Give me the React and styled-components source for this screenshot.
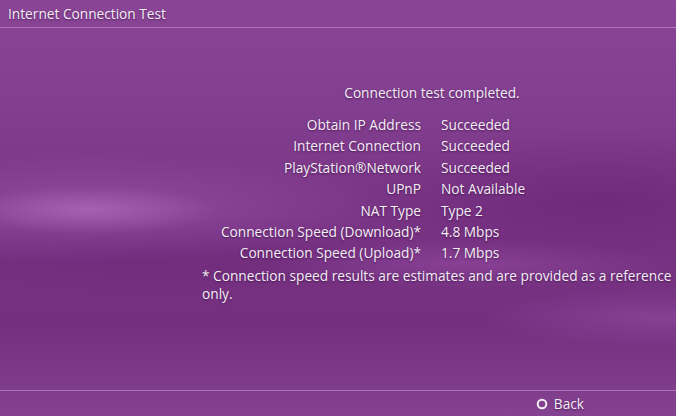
import styled, { createGlobalStyle } from "styled-components";

const GlobalStyle = createGlobalStyle`
  html, body {
    margin: 0;
    padding: 0;
    background: #7a3585;
  }
  * {
    box-sizing: border-box;
  }
`;

const Screen = styled.div`
  width: 676px;
  height: 416px;
  display: flex;
  flex-direction: column;
  overflow: hidden;
  font-family: "Open Sans", "Noto Sans", "Liberation Sans", sans-serif;
  font-size: 13.7px;
  color: #f4eef5;
  text-shadow: 0 1px 2px rgba(40, 0, 50, 0.55);
  background:
    radial-gradient(ellipse 130px 24px at 90px 210px, rgba(185, 115, 195, 0.55), rgba(185, 115, 195, 0) 100%),
    radial-gradient(ellipse 300px 55px at 90px 208px, rgba(165, 95, 180, 0.5), rgba(165, 95, 180, 0) 100%),
    radial-gradient(ellipse 200px 24px at 470px 264px, rgba(160, 85, 175, 0.4), rgba(160, 85, 175, 0) 100%),
    radial-gradient(ellipse 180px 30px at 660px 318px, rgba(160, 90, 175, 0.4), rgba(160, 90, 175, 0) 100%),
    radial-gradient(ellipse 260px 70px at 600px 200px, rgba(95, 25, 105, 0.4), rgba(95, 25, 105, 0) 100%),
    radial-gradient(ellipse 280px 45px at 150px 255px, rgba(100, 30, 110, 0.35), rgba(100, 30, 110, 0) 100%),
    linear-gradient(180deg, #8a4596 0%, #823e8f 25%, #7a3586 50%, #74307f 78%, #844291 100%);
`;

const TitleBar = styled.header`
  height: 28px;
  display: flex;
  align-items: center;
  padding-left: 8px;
  border-bottom: 1px solid rgba(210, 160, 215, 0.55);
`;

const Body = styled.main`
  flex: 1;
  display: flex;
  flex-direction: column;
  padding: 55px 0 0 202px;
`;

const Heading = styled.div`
  width: 460px;
  text-align: center;
  margin-bottom: 14px;
`;

const Results = styled.div`
  display: grid;
  grid-template-columns: 219px auto;
  column-gap: 20px;
  row-gap: 3px;
  line-height: 18.4px;
`;

const Label = styled.span`
  text-align: right;
`;

const Value = styled.span`
  text-align: left;
`;

const Note = styled.p`
  margin: 4px 0 0;
  width: 474px;
  line-height: 18px;
`;

const Footer = styled.footer`
  height: 26px;
  display: flex;
  align-items: center;
  justify-content: flex-end;
  padding-right: 92px;
  border-top: 1px solid rgba(210, 160, 215, 0.55);
  gap: 6px;
`;

const rows = [
  ["Obtain IP Address", "Succeeded"],
  ["Internet Connection", "Succeeded"],
  ["PlayStation®Network", "Succeeded"],
  ["UPnP", "Not Available"],
  ["NAT Type", "Type 2"],
  ["Connection Speed (Download)*", "4.8 Mbps"],
  ["Connection Speed (Upload)*", "1.7 Mbps"],
];

const CircleIcon = () => (
  <svg width="12" height="12" viewBox="0 0 12 12">
    <circle cx="6" cy="6" r="4.3" fill="none" stroke="#f4eef5" strokeWidth="2" />
  </svg>
);

export default function App() {
  return (
    <>
      <GlobalStyle />
      <Screen>
        <TitleBar>Internet Connection Test</TitleBar>
        <Body>
          <Heading>Connection test completed.</Heading>
          <Results>
            {rows.map(([label, value]) => [
              <Label key={label}>{label}</Label>,
              <Value key={label + "-v"}>{value}</Value>,
            ])}
          </Results>
          <Note>
            * Connection speed results are estimates and are provided as a reference only.
          </Note>
        </Body>
        <Footer>
          <CircleIcon />
          Back
        </Footer>
      </Screen>
    </>
  );
}
